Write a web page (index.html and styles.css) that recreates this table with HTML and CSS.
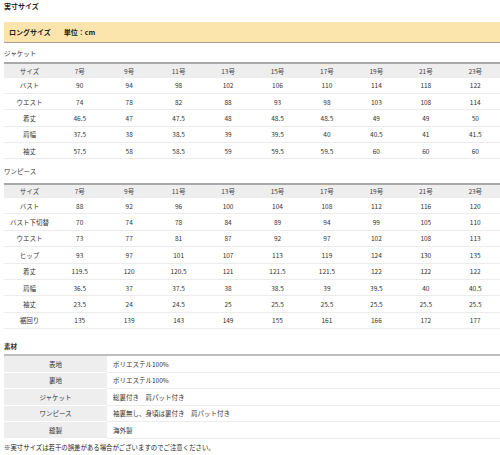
FILE: index.html
```html
<!DOCTYPE html>
<html lang="ja">
<head>
<meta charset="utf-8">
<link rel="stylesheet" href="styles.css">
</head>
<body>
<div class="page">
  <div class="title">実寸サイズ</div>
  <div class="band"><span class="band-name">ロングサイズ</span><span class="band-unit">単位：cm</span></div>

  <div class="sub">ジャケット</div>
  <div class="sizes jacket">
    <div class="row head"><span>サイズ</span><span>7号</span><span>9号</span><span>11号</span><span>13号</span><span>15号</span><span>17号</span><span>19号</span><span>21号</span><span>23号</span></div>
    <div class="row"><span>バスト</span><span>90</span><span>94</span><span>98</span><span>102</span><span>106</span><span>110</span><span>114</span><span>118</span><span>122</span></div>
    <div class="row"><span>ウエスト</span><span>74</span><span>78</span><span>82</span><span>88</span><span>93</span><span>98</span><span>103</span><span>108</span><span>114</span></div>
    <div class="row"><span>着丈</span><span>46.5</span><span>47</span><span>47.5</span><span>48</span><span>48.5</span><span>48.5</span><span>49</span><span>49</span><span>50</span></div>
    <div class="row"><span>肩幅</span><span>37.5</span><span>38</span><span>38.5</span><span>39</span><span>39.5</span><span>40</span><span>40.5</span><span>41</span><span>41.5</span></div>
    <div class="row"><span>袖丈</span><span>57.5</span><span>58</span><span>58.5</span><span>59</span><span>59.5</span><span>59.5</span><span>60</span><span>60</span><span>60</span></div>
  </div>

  <div class="sub sub2">ワンピース</div>
  <div class="sizes onepiece">
    <div class="row head"><span>サイズ</span><span>7号</span><span>9号</span><span>11号</span><span>13号</span><span>15号</span><span>17号</span><span>19号</span><span>21号</span><span>23号</span></div>
    <div class="row"><span>バスト</span><span>88</span><span>92</span><span>96</span><span>100</span><span>104</span><span>108</span><span>112</span><span>116</span><span>120</span></div>
    <div class="row"><span>バスト下切替</span><span>70</span><span>74</span><span>78</span><span>84</span><span>89</span><span>94</span><span>99</span><span>105</span><span>110</span></div>
    <div class="row"><span>ウエスト</span><span>73</span><span>77</span><span>81</span><span>87</span><span>92</span><span>97</span><span>102</span><span>108</span><span>113</span></div>
    <div class="row"><span>ヒップ</span><span>93</span><span>97</span><span>101</span><span>107</span><span>113</span><span>119</span><span>124</span><span>130</span><span>135</span></div>
    <div class="row"><span>着丈</span><span>119.5</span><span>120</span><span>120.5</span><span>121</span><span>121.5</span><span>121.5</span><span>122</span><span>122</span><span>122</span></div>
    <div class="row"><span>肩幅</span><span>36.5</span><span>37</span><span>37.5</span><span>38</span><span>38.5</span><span>39</span><span>39.5</span><span>40</span><span>40.5</span></div>
    <div class="row"><span>袖丈</span><span>23.5</span><span>24</span><span>24.5</span><span>25</span><span>25.5</span><span>25.5</span><span>25.5</span><span>25.5</span><span>25.5</span></div>
    <div class="row"><span>裾回り</span><span>135</span><span>139</span><span>143</span><span>149</span><span>155</span><span>161</span><span>166</span><span>172</span><span>177</span></div>
  </div>

  <div class="sub sub3 bold">素材</div>
  <div class="material">
    <div class="mrow"><span class="mkey">表地</span><span class="mval">ポリエステル100%</span></div>
    <div class="mrow"><span class="mkey">裏地</span><span class="mval">ポリエステル100%</span></div>
    <div class="mrow"><span class="mkey">ジャケット</span><span class="mval">総裏付き　肩パット付き</span></div>
    <div class="mrow"><span class="mkey">ワンピース</span><span class="mval">袖裏無し、身頃は裏付き　肩パット付き</span></div>
    <div class="mrow"><span class="mkey">縫製</span><span class="mval">海外製</span></div>
  </div>
  <div class="note">※実寸サイズは若干の誤差がある場合がございますのでご注意ください。</div>
</div>
</body>
</html>
```

FILE: styles.css
```css
html, body {
  margin: 0;
  padding: 0;
  background: #fff;
  overflow: hidden;
}
body {
  font-family: "Noto Sans CJK JP", "Noto Sans", sans-serif;
  color: #333;
  font-size: 6.5px;
}
.page {
  width: 496px;
  padding-left: 4px;
}
.title {
  font-size: 7px;
  font-weight: bold;
  line-height: 12px;
  height: 12px;
  color: #222;
}
.band {
  margin-top: 10px;
  height: 20px;
  background: #fce4ad;
  border-bottom: 1.5px solid #ad9f8c;
  display: flex;
  align-items: center;
  padding-left: 5px;
  font-size: 7px;
  font-weight: bold;
  color: #222;
}
.band-unit {
  margin-left: 13px;
}
.sub {
  margin-top: 4px;
  line-height: 12px;
  height: 12px;
  font-size: 6.5px;
  color: #333;
}
.sub2 {
  margin-top: 6px;
}
.sub3 {
  margin-top: 11px;
}
.bold {
  font-weight: bold;
}
.sizes {
  margin-top: 2.5px;
  border-top: 2px solid #a9a9a9;
}
.onepiece {
  margin-top: 5.5px;
}
.row {
  display: grid;
  grid-template-columns: 51px repeat(9, 1fr);
  height: 16.4px;
  align-items: center;
  border-bottom: 1px solid #ececec;
  box-sizing: border-box;
}
.row span {
  text-align: center;
}
.row.head {
  height: 13px;
  background: #eeeeee;
  border-bottom: none;
  color: #444;
}
.jacket .row.head {
  height: 14px;
}
.material {
  margin-top: 2px;
  border-top: 2px solid #bdbdbd;
}
.mrow {
  display: flex;
  height: 16.5px;
  box-sizing: border-box;
  border-bottom: 1px solid #ececec;
}
.mkey {
  width: 103px;
  flex: none;
  background: #eeeeee;
  border-bottom: 1px solid #fff;
  margin-bottom: -1px;
  display: flex;
  align-items: center;
  justify-content: center;
}
.mval {
  display: flex;
  align-items: center;
  padding-left: 6px;
}
.note {
  margin-top: 3px;
  line-height: 12px;
  font-size: 6.4px;
  color: #222;
}
```
